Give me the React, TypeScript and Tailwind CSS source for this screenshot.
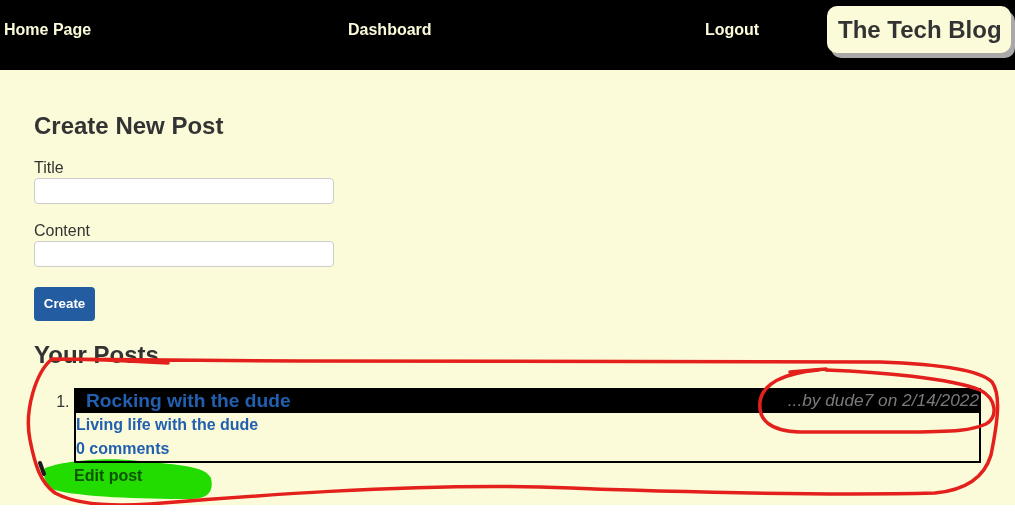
import React from "react";

function Annotations() {
  return (
    <svg
      className="pointer-events-none absolute left-0 top-0"
      width={1015}
      height={514}
      viewBox="0 0 1015 514"
    >
      <path
        d="M 45 468 C 60 462, 100 456, 140 461 C 180 465, 205 466, 211 478 C 214 492, 208 499, 190 499 C 140 499, 80 497, 55 490 C 45 485, 42 475, 45 468 Z"
        fill="#22e000"
        className="mix-blend-multiply"
      />
      <path d="M 40 463 L 44 474" stroke="#1a1a1a" strokeWidth={4} strokeLinecap="round" fill="none" />
      <g fill="none" stroke="#e3201c" strokeWidth={3.5} strokeLinecap="round" strokeLinejoin="round">
        <path d="M 168 363 L 128 361 Q 80 359 52 359 C 36 372, 24 410, 30 440 C 35 465, 40 482, 55 493 C 75 504, 105 507, 150 504 C 250 496, 400 484, 540 487 C 700 493, 850 495, 935 493 C 968 490, 985 475, 991 455 C 998 420, 1001 395, 992 382 C 980 370, 940 364, 880 362 L 300 361 Q 120 360 52 359" />
        <path d="M 790 372 L 826 369" />
        <path d="M 826 370 C 880 372, 950 378, 980 390 C 997 399, 998 417, 986 424 C 972 430, 960 432, 900 432 L 800 432 C 770 431, 758 420, 760 402 C 762 386, 778 374, 818 370" />
      </g>
    </svg>
  );
}

export default function App() {
  return (
    <div
      className="relative w-[1015px]"
      style={{ fontFamily: '"Liberation Sans", Arial, sans-serif' }}
    >
      <header className="flex h-[70px] items-center bg-black pb-[11px] text-[16px] font-bold text-[#fcfbd9]">
        <a className="w-[348px] pl-[4px]">Home Page</a>
        <a className="w-[357px]">Dashboard</a>
        <a className="w-[122px]">Logout</a>
        <div className="flex h-[47px] w-[184px] items-center rounded-[10px] bg-[#fcfbd9] pl-[11px] text-[24px] font-bold text-[#333] shadow-[4px_5px_0_#a9a9a9]">
          The Tech Blog
        </div>
      </header>

      <main className="bg-[#fcfbd9] px-[34px] pb-[17px] pt-[42px] text-[#333]">
        <h2 className="text-[24px] font-bold leading-[1.2]">Create New Post</h2>
        <form className="mt-[18px] flex flex-col">
          <label className="text-[16px] leading-[18px]">Title</label>
          <input className="mt-[1px] h-[26px] w-[300px] rounded-[4px] border border-[#ccc] bg-white" />
          <label className="mt-[18px] text-[16px] leading-[18px]">Content</label>
          <input className="mt-[1px] h-[26px] w-[300px] rounded-[4px] border border-[#ccc] bg-white" />
          <button
            type="button"
            className="mt-[20px] h-[34px] w-[61px] rounded-[4px] bg-[#235ca1] text-[13.33px] font-bold text-white"
          >
            Create
          </button>
        </form>

        <h2 className="mt-[20px] text-[24px] font-bold leading-[1.2]">Your Posts</h2>
        <ol className="mt-[18px] list-decimal pl-[40px]">
          <li className="text-[16px]">
            <div className="border-2 border-black">
              <div className="flex h-[23px] items-start justify-between bg-black">
                <span className="pl-[10px] text-[19.2px] font-bold leading-[21px] text-[#2160b0]">
                  Rocking with the dude
                </span>
                <span className="text-[17.3px] italic leading-[20px] text-[#7a7a7a]">
                  ...by dude7 on 2/14/2022
                </span>
              </div>
              <p className="text-[16px] font-bold leading-[24px] text-[#2160b0]">
                Living life with the dude
              </p>
              <p className="text-[16px] font-bold leading-[24px] text-[#2160b0]">0 comments</p>
            </div>
            <a className="mt-[1px] block text-[16px] font-bold leading-[24px] text-[#606060]">Edit post</a>
          </li>
        </ol>
      </main>
      <Annotations />
    </div>
  );
}
